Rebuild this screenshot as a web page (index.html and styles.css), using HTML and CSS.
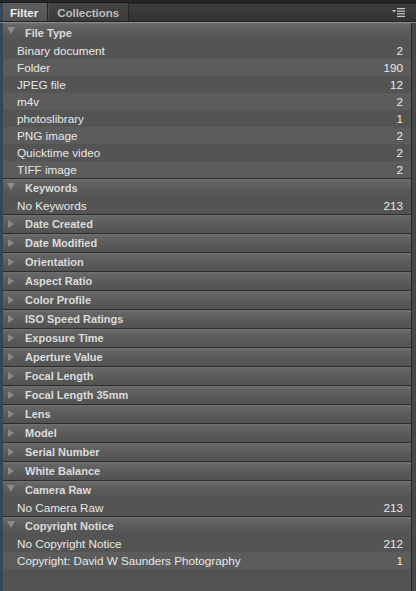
FILE: index.html
```html
<!DOCTYPE html>
<html>
<head>
<meta charset="utf-8">
<link rel="stylesheet" href="styles.css">
</head>
<body>
<div class="app">
  <div class="topstrip"></div>
  <div class="tabbar">
    <div class="tab active">Filter</div>
    <div class="tab">Collections</div>
    <div class="tabfill">
      <svg class="menu" width="13" height="9" viewBox="0 0 13 9">
        <polygon points="0,2 4,2 2,4.5" fill="#c8c8c8"/>
        <rect x="5" y="0" width="8" height="1.2" fill="#c8c8c8"/>
        <rect x="5" y="2.6" width="8" height="1.2" fill="#c8c8c8"/>
        <rect x="5" y="5.2" width="8" height="1.2" fill="#c8c8c8"/>
        <rect x="5" y="7.8" width="8" height="1.2" fill="#c8c8c8"/>
      </svg>
    </div>
  </div>
  <div class="main">
    <div class="edge"></div>
    <div class="panel">
      <div class="hdr open"><span class="tri"></span>File Type</div>
      <div class="row"><span>Binary document</span><span>2</span></div>
      <div class="row alt"><span>Folder</span><span>190</span></div>
      <div class="row"><span>JPEG file</span><span>12</span></div>
      <div class="row alt"><span>m4v</span><span>2</span></div>
      <div class="row"><span>photoslibrary</span><span>1</span></div>
      <div class="row alt"><span>PNG image</span><span>2</span></div>
      <div class="row"><span>Quicktime video</span><span>2</span></div>
      <div class="row alt"><span>TIFF image</span><span>2</span></div>
      <div class="hdr open"><span class="tri"></span>Keywords</div>
      <div class="row"><span>No Keywords</span><span>213</span></div>
      <div class="hdr"><span class="tri"></span>Date Created</div>
      <div class="hdr"><span class="tri"></span>Date Modified</div>
      <div class="hdr"><span class="tri"></span>Orientation</div>
      <div class="hdr"><span class="tri"></span>Aspect Ratio</div>
      <div class="hdr"><span class="tri"></span>Color Profile</div>
      <div class="hdr"><span class="tri"></span>ISO Speed Ratings</div>
      <div class="hdr"><span class="tri"></span>Exposure Time</div>
      <div class="hdr"><span class="tri"></span>Aperture Value</div>
      <div class="hdr"><span class="tri"></span>Focal Length</div>
      <div class="hdr"><span class="tri"></span>Focal Length 35mm</div>
      <div class="hdr"><span class="tri"></span>Lens</div>
      <div class="hdr"><span class="tri"></span>Model</div>
      <div class="hdr"><span class="tri"></span>Serial Number</div>
      <div class="hdr"><span class="tri"></span>White Balance</div>
      <div class="hdr open"><span class="tri"></span>Camera Raw</div>
      <div class="row"><span>No Camera Raw</span><span>213</span></div>
      <div class="hdr open"><span class="tri"></span>Copyright Notice</div>
      <div class="row"><span>No Copyright Notice</span><span>212</span></div>
      <div class="row alt"><span>Copyright: David W Saunders Photography</span><span>1</span></div>
    </div>
    <div class="rightedge"></div>
  </div>
</div>
</body>
</html>
```

FILE: styles.css
```css
html, body {
  margin: 0;
  padding: 0;
  background: #535353;
}
.app {
  width: 416px;
  height: 591px;
  display: flex;
  flex-direction: column;
  font-family: "Liberation Sans", Arial, sans-serif;
  overflow: hidden;
}
.topstrip {
  height: 2px;
  background: #262626;
  border-bottom: 1px solid #1c1c1c;
}
.tabbar {
  height: 18px;
  display: flex;
  background: linear-gradient(#3e3e3e, #333333);
  border-bottom: 1px solid #232323;
}
.tab {
  display: flex;
  align-items: center;
  padding: 1px 9px 0 8px;
  font-size: 11.5px;
  font-weight: bold;
  color: #bdbdbd;
  background: linear-gradient(#454545, #3a3a3a);
  border-right: 1px solid #262626;
  border-left: 1px solid #4e4e4e;
}
.tab.active {
  color: #eeeeee;
  padding: 1px 9px 0 7px;
  background: linear-gradient(#5e5e5e, #535353);
  border-left: 3px solid #394659;
}
.tabfill {
  flex: 1;
  display: flex;
  align-items: center;
  justify-content: flex-end;
  padding-right: 11px;
  border-top: 1px solid #2a2a2a;
}
.menu {
  display: block;
  margin-top: 0;
}
.main {
  flex: 1;
  display: flex;
  border-top: 1px solid #8a8a8a;
}
.edge {
  width: 3px;
  background: #394659;
}
.rightedge {
  width: 4px;
  background: #474747;
  border-left: 1px solid #262626;
}
.panel {
  flex: 1;
  display: flex;
  flex-direction: column;
  background: #535353;
}
.hdr {
  height: 18px;
  display: flex;
  align-items: center;
  padding-left: 22px;
  position: relative;
  font-size: 11px;
  font-weight: bold;
  color: #dcdcdc;
  background: linear-gradient(#727272 0px, #666666 2px, #5a5a5a 10px, #535353 18px);
  border-top: 1px solid #2c2c2c;
}
.panel .hdr:first-child {
  border-top: none;
  height: 19px;
}
.tri {
  position: absolute;
  left: 5px;
  top: 5px;
  width: 0;
  height: 0;
  border-top: 4px solid transparent;
  border-bottom: 4px solid transparent;
  border-left: 6px solid #8a8a8a;
}
.hdr.open .tri {
  left: 4px;
  top: 4px;
  border-left: 4px solid transparent;
  border-right: 4px solid transparent;
  border-top: 7px solid #8a8a8a;
  border-bottom: none;
}
.row {
  height: 17px;
  display: flex;
  align-items: center;
  justify-content: space-between;
  padding: 0 8px 0 14px;
  font-size: 11.7px;
  color: #e8e8e8;
  background: #545454;
}
.row.alt {
  background: #5c5c5c;
}
```
